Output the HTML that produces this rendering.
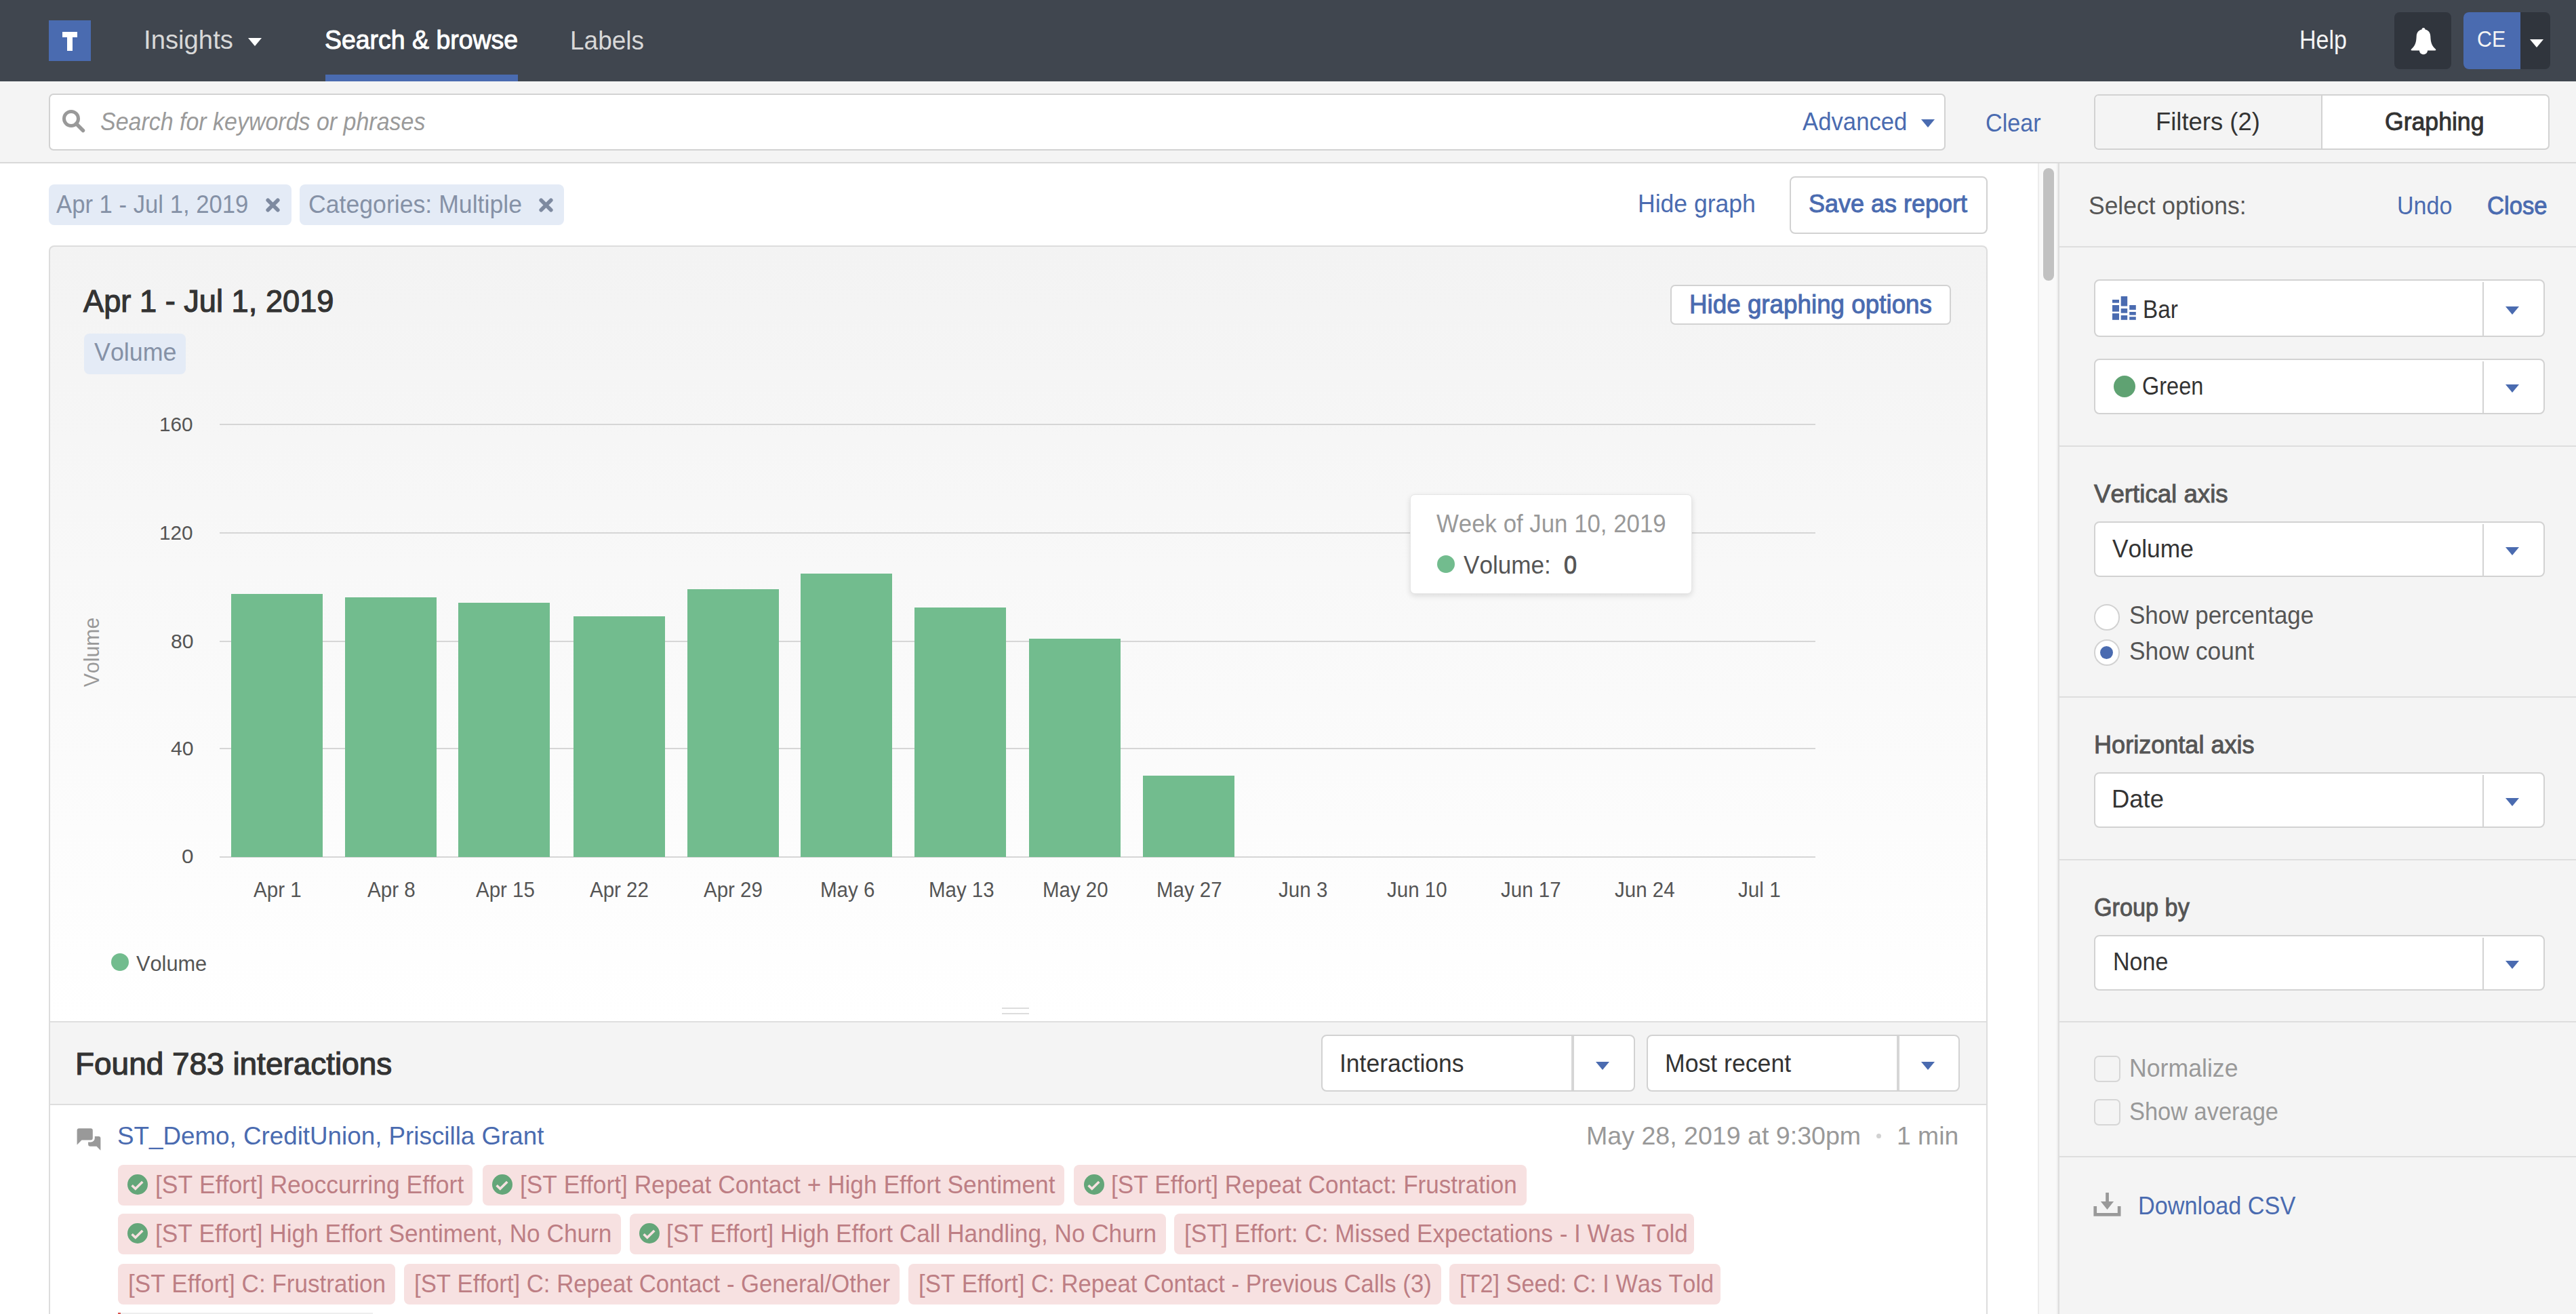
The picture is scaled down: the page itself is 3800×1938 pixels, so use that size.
<!DOCTYPE html>
<html><head><meta charset="utf-8">
<style>
*{box-sizing:border-box;margin:0;padding:0}
html,body{width:3800px;height:1938px;overflow:hidden;background:#fff;font-family:"Liberation Sans",sans-serif;color:#333}
.a{position:absolute}
.t{position:absolute;white-space:nowrap;line-height:1;font-kerning:none;transform-origin:0 0}
</style></head><body>
<div class="a" style="left:0px;top:0px;width:3800px;height:120px;background:#40464f;"></div>
<div class="a" style="left:72px;top:30px;width:62px;height:60px;background:#4a6bb0;"></div>
<div class="a" style="left:92px;top:47px;width:22px;height:8px;background:#fff;"></div>
<div class="a" style="left:99px;top:47px;width:8px;height:28px;background:#fff;"></div>
<div class="t" style="left:212.4px;top:39.2px;font-size:39px;color:#d8d8d8;transform:scaleX(0.9817);">Insights</div>
<div class="a" style="left:366.0px;top:56px;width:0;height:0;border-left:10.0px solid transparent;border-right:10.0px solid transparent;border-top:12px solid #fff"></div>
<div class="t" style="left:479.2px;top:39.7px;font-size:38.5px;color:#fff;-webkit-text-stroke:1.01px #fff;transform:scaleX(0.9724);">Search &amp; browse</div>
<div class="a" style="left:480px;top:110px;width:284px;height:10px;background:#4a6bb0;"></div>
<div class="t" style="left:841.0px;top:39.5px;font-size:39px;color:#d8d8d8;transform:scaleX(0.9490);">Labels</div>
<div class="t" style="left:3391.8px;top:39.3px;font-size:39px;color:#f4f4f4;transform:scaleX(0.8734);">Help</div>
<div class="a" style="left:3532px;top:18px;width:84px;height:84px;background:#30353d;border:0px solid transparent;border-radius:8px;"></div>
<svg class="a" style="left:3552px;top:38px" width="46" height="46" viewBox="0 0 46 46"><path fill="#fff" d="M23 3c1.5 0 2.5 1 2.5 2.4c4.8 1 7.6 4.6 7.8 9.8c.4 9.3 1.6 13.8 7.6 19.4c.9.9.5 2-.8 2H5.9c-1.3 0-1.7-1.1-.8-2c6-5.6 7.2-10.1 7.6-19.4c.2-5.2 3-8.8 7.8-9.8c0-1.4 1-2.4 2.5-2.4zM17 36.4h12c0 3.3-2.7 5.8-6 5.8s-6-2.5-6-5.8z"/></svg>
<div class="a" style="left:3634px;top:18px;width:128px;height:84px;background:#30353d;border:0px solid transparent;border-radius:8px;"></div>
<div class="a" style="left:3634px;top:18px;width:84px;height:84px;background:#4a6bb0;border-radius:8px 0 0 8px"></div>
<div class="t" style="left:3653.8px;top:41.1px;font-size:33px;color:#f4f4f4;transform:scaleX(0.9222);">CE</div>
<div class="a" style="left:3732.0px;top:58px;width:0;height:0;border-left:10.0px solid transparent;border-right:10.0px solid transparent;border-top:12px solid #fff"></div>
<div class="a" style="left:0px;top:120px;width:3800px;height:119px;background:#f4f4f4;"></div>
<div class="a" style="left:0px;top:239px;width:3800px;height:2px;background:#d9d9d9;"></div>
<div class="a" style="left:72px;top:138px;width:2798px;height:84px;background:#fff;border:2px solid #d2d2d2;border-radius:7px;"></div>
<svg class="a" style="left:90px;top:160px" width="38" height="38" viewBox="0 0 38 38"><circle cx="15" cy="15" r="10.5" fill="none" stroke="#999" stroke-width="5"/><path d="M22.5 22.5l10 10" stroke="#999" stroke-width="5.5" stroke-linecap="round"/></svg>
<div class="t" style="left:148.0px;top:161.6px;font-size:36px;color:#9a9a9a;font-style:italic;transform:scaleX(0.9433);">Search for keywords or phrases</div>
<div class="t" style="left:2659.0px;top:161.2px;font-size:37px;color:#4a6bb0;transform:scaleX(0.9384);">Advanced</div>
<div class="a" style="left:2834.0px;top:176px;width:0;height:0;border-left:10.0px solid transparent;border-right:10.0px solid transparent;border-top:12px solid #4a6bb0"></div>
<div class="t" style="left:2929.0px;top:162.7px;font-size:37px;color:#4a6bb0;transform:scaleX(0.9216);">Clear</div>
<div class="a" style="left:3089px;top:138.5px;width:672px;height:82.5px;background:#fff;border:2px solid #d2d2d2;border-radius:7px;"></div>
<div class="a" style="left:3091px;top:140.5px;width:334px;height:78.5px;background:#f4f4f4;border-radius:5px 0 0 5px"></div>
<div class="a" style="left:3424px;top:140px;width:2px;height:80px;background:#d2d2d2;"></div>
<div class="t" style="left:3179.5px;top:161.2px;font-size:37px;color:#333;transform:scaleX(0.9844);">Filters (2)</div>
<div class="t" style="left:3518.0px;top:161.2px;font-size:37px;color:#333;-webkit-text-stroke:0.97px #333;transform:scaleX(0.9622);">Graphing</div>
<div class="a" style="left:0px;top:241px;width:3037px;height:1697px;background:#fff;"></div>
<div class="a" style="left:72px;top:272px;width:358px;height:60px;background:#e4ebf6;border:0px solid transparent;border-radius:8px;"></div>
<div class="t" style="left:83.2px;top:283.5px;font-size:36px;color:#8591a6;transform:scaleX(0.9632);">Apr 1 - Jul 1, 2019</div>
<svg class="a" style="left:392px;top:291.5px" width="21" height="21" viewBox="0 0 21 21"><path d="M3.2 3.2l14.6 14.6M17.8 3.2l-14.6 14.6" stroke="#7e8aa0" stroke-width="5.6" stroke-linecap="round"/></svg>
<div class="a" style="left:442px;top:272px;width:390px;height:60px;background:#e4ebf6;border:0px solid transparent;border-radius:8px;"></div>
<div class="t" style="left:455.0px;top:283.5px;font-size:36px;color:#8591a6;transform:scaleX(0.9901);">Categories: Multiple</div>
<svg class="a" style="left:794.5px;top:291.5px" width="21" height="21" viewBox="0 0 21 21"><path d="M3.2 3.2l14.6 14.6M17.8 3.2l-14.6 14.6" stroke="#7e8aa0" stroke-width="5.6" stroke-linecap="round"/></svg>
<div class="t" style="left:2415.7px;top:283.1px;font-size:36px;color:#4a6bb0;transform:scaleX(0.9873);">Hide graph</div>
<div class="a" style="left:2640px;top:260px;width:292px;height:85px;background:#fff;border:2px solid #d2d2d2;border-radius:8px;"></div>
<div class="t" style="left:2668.4px;top:282.3px;font-size:37px;color:#4a6bb0;-webkit-text-stroke:0.97px #4a6bb0;transform:scaleX(0.9726);">Save as report</div>
<div class="a" style="left:72px;top:362px;width:2860px;height:1576px;border:2px solid #dddddd;border-bottom:none;border-radius:8px 8px 0 0;background:linear-gradient(to bottom,#f3f3f3 0px,#ffffff 1144px)"></div>
<div class="t" style="left:123.0px;top:420.4px;font-size:47px;color:#333;-webkit-text-stroke:1.24px #333;transform:scaleX(0.9620);">Apr 1 - Jul 1, 2019</div>
<div class="a" style="left:124px;top:492px;width:150px;height:60px;background:#e4ebf6;border:0px solid transparent;border-radius:8px;"></div>
<div class="t" style="left:138.6px;top:501.5px;font-size:36px;color:#8591a6;transform:scaleX(0.9953);">Volume</div>
<div class="a" style="left:2464px;top:420px;width:414px;height:59px;background:#fff;border:2px solid #d2d2d2;border-radius:7px;"></div>
<div class="t" style="left:2491.5px;top:430.4px;font-size:38px;color:#4a6bb0;-webkit-text-stroke:1.00px #4a6bb0;transform:scaleX(0.9682);">Hide graphing options</div>
<div class="a" style="left:324px;top:625px;width:2354px;height:2px;background:#d6d6d6;"></div>
<div class="a" style="left:324px;top:785px;width:2354px;height:2px;background:#d6d6d6;"></div>
<div class="a" style="left:324px;top:945px;width:2354px;height:2px;background:#d6d6d6;"></div>
<div class="a" style="left:324px;top:1103px;width:2354px;height:2px;background:#d6d6d6;"></div>
<div class="a" style="left:324px;top:1263px;width:2354px;height:2px;background:#d6d6d6;"></div>
<div class="t" style="left:235.4px;top:610.6px;font-size:30px;color:#555;transform:scaleX(0.9899);">160</div>
<div class="t" style="left:235.4px;top:770.9px;font-size:30px;color:#555;transform:scaleX(0.9899);">120</div>
<div class="t" style="left:251.5px;top:930.6px;font-size:30px;color:#555;transform:scaleX(1.0050);">80</div>
<div class="t" style="left:251.5px;top:1089.1px;font-size:30px;color:#555;transform:scaleX(1.0050);">40</div>
<div class="t" style="left:267.5px;top:1248.3px;font-size:30px;color:#555;transform:scaleX(1.0501);">0</div>
<div class="t" style="left:85px;top:950px;width:100px;text-align:center;font-size:32px;color:#999;transform-origin:50% 50%;transform:rotate(-90deg) scaleX(0.9464)">Volume</div>
<div class="a" style="left:341.4px;top:876.4px;width:135px;height:387.6px;background:#72bc8e"></div>
<div class="a" style="left:508.9px;top:881.2px;width:135px;height:382.8px;background:#72bc8e"></div>
<div class="a" style="left:676.3px;top:888.9px;width:135px;height:375.1px;background:#72bc8e"></div>
<div class="a" style="left:846.1px;top:909px;width:135px;height:355.0px;background:#72bc8e"></div>
<div class="a" style="left:1013.6px;top:868.7px;width:135px;height:395.3px;background:#72bc8e"></div>
<div class="a" style="left:1181.0px;top:846.1px;width:135px;height:417.9px;background:#72bc8e"></div>
<div class="a" style="left:1348.5px;top:896px;width:135px;height:368.0px;background:#72bc8e"></div>
<div class="a" style="left:1518.4px;top:941.7px;width:135px;height:322.3px;background:#72bc8e"></div>
<div class="a" style="left:1686.0px;top:1143.8px;width:135px;height:120.2px;background:#72bc8e"></div>
<div class="t" style="left:373.6px;top:1296.8px;font-size:31px;color:#555;transform:scaleX(0.9552);">Apr 1</div>
<div class="t" style="left:541.8px;top:1296.8px;font-size:31px;color:#555;transform:scaleX(0.9552);">Apr 8</div>
<div class="t" style="left:701.8px;top:1296.8px;font-size:31px;color:#555;transform:scaleX(0.9514);">Apr 15</div>
<div class="t" style="left:870.0px;top:1296.8px;font-size:31px;color:#555;transform:scaleX(0.9514);">Apr 22</div>
<div class="t" style="left:1038.1px;top:1296.8px;font-size:31px;color:#555;transform:scaleX(0.9514);">Apr 29</div>
<div class="t" style="left:1209.5px;top:1296.8px;font-size:31px;color:#555;transform:scaleX(0.9528);">May 6</div>
<div class="t" style="left:1369.6px;top:1296.8px;font-size:31px;color:#555;transform:scaleX(0.9498);">May 13</div>
<div class="t" style="left:1537.7px;top:1296.8px;font-size:31px;color:#555;transform:scaleX(0.9498);">May 20</div>
<div class="t" style="left:1705.8px;top:1296.8px;font-size:31px;color:#555;transform:scaleX(0.9498);">May 27</div>
<div class="t" style="left:1886.1px;top:1296.8px;font-size:31px;color:#555;transform:scaleX(0.9548);">Jun 3</div>
<div class="t" style="left:2046.1px;top:1296.8px;font-size:31px;color:#555;transform:scaleX(0.9511);">Jun 10</div>
<div class="t" style="left:2214.2px;top:1296.8px;font-size:31px;color:#555;transform:scaleX(0.9511);">Jun 17</div>
<div class="t" style="left:2382.4px;top:1296.8px;font-size:31px;color:#555;transform:scaleX(0.9511);">Jun 24</div>
<div class="t" style="left:2563.5px;top:1296.8px;font-size:31px;color:#555;transform:scaleX(0.9579);">Jul 1</div>
<div class="a" style="left:164px;top:1406px;width:26px;height:26px;border-radius:50%;background:#72bc8e"></div>
<div class="t" style="left:201.0px;top:1405.8px;font-size:31px;color:#555;transform:scaleX(0.9914);">Volume</div>
<div class="a" style="left:2080px;top:729px;width:416px;height:147px;background:#fff;border:1px solid #e6e6e6;border-radius:7px;box-shadow:0 3px 8px rgba(0,0,0,0.12)"></div>
<div class="t" style="left:2119.0px;top:753.5px;font-size:37px;color:#999;transform:scaleX(0.9408);">Week of Jun 10, 2019</div>
<div class="a" style="left:2120px;top:818.5px;width:26px;height:26px;border-radius:50%;background:#72bc8e"></div>
<div class="t" style="left:2158.7px;top:815.0px;font-size:37px;color:#555;transform:scaleX(0.9480);">Volume:</div>
<div class="t" style="left:2306.7px;top:815.0px;font-size:37px;color:#555;-webkit-text-stroke:0.97px #555;transform:scaleX(0.9252);">0</div>
<div class="a" style="left:1478px;top:1486px;width:40px;height:2px;background:#dddddd;"></div>
<div class="a" style="left:1478px;top:1494px;width:40px;height:2px;background:#dddddd;"></div>
<div class="a" style="left:74px;top:1506px;width:2856px;height:2px;background:#dedede;"></div>
<div class="a" style="left:74px;top:1508px;width:2856px;height:120px;background:#f4f4f4;"></div>
<div class="a" style="left:74px;top:1628px;width:2856px;height:2px;background:#dedede;"></div>
<div class="a" style="left:74px;top:1630px;width:2856px;height:308px;background:#ffffff;"></div>
<div class="t" style="left:111.2px;top:1544.9px;font-size:47px;color:#333;-webkit-text-stroke:1.24px #333;transform:scaleX(0.9772);">Found 783 interactions</div>
<div class="a" style="left:1949px;top:1526px;width:462.5px;height:84px;background:#fff;border:2px solid #d2d2d2;border-radius:8px;"></div>
<div class="a" style="left:2318px;top:1528px;width:4px;height:80px;background:#d6d6d6;"></div>
<div class="t" style="left:1976.3px;top:1549.5px;font-size:37px;color:#333;transform:scaleX(0.9598);">Interactions</div>
<div class="a" style="left:2354.0px;top:1566px;width:0;height:0;border-left:10.0px solid transparent;border-right:10.0px solid transparent;border-top:12px solid #4a6bb0"></div>
<div class="a" style="left:2428.5px;top:1526px;width:462.5px;height:84px;background:#fff;border:2px solid #d2d2d2;border-radius:8px;"></div>
<div class="a" style="left:2798px;top:1528px;width:4px;height:80px;background:#d6d6d6;"></div>
<div class="t" style="left:2456.0px;top:1549.5px;font-size:37px;color:#333;transform:scaleX(0.9631);">Most recent</div>
<div class="a" style="left:2834.0px;top:1566px;width:0;height:0;border-left:10.0px solid transparent;border-right:10.0px solid transparent;border-top:12px solid #4a6bb0"></div>
<svg class="a" style="left:110px;top:1660px" width="42" height="40" viewBox="0 0 42 40"><path fill="#999" d="M23.1 16.1H35.4a3 3 0 0 1 3 3V36.7L32.5 30.8H23.1a3 3 0 0 1-3-3V19.1a3 3 0 0 1 3-3z"/><rect x="0.6" y="1.3" width="29.2" height="23.3" rx="6" fill="#fff"/><path fill="#999" d="M6.6 4.3H23.8a3 3 0 0 1 3 3V18.6a3 3 0 0 1-3 3H10.5L3.6 28.5V7.3a3 3 0 0 1 3-3z"/></svg>
<div class="t" style="left:173.3px;top:1656.7px;font-size:37px;color:#4a6bb0;transform:scaleX(0.9939);">ST_Demo, CreditUnion, Priscilla Grant</div>
<div class="t" style="left:2340.0px;top:1656.7px;font-size:37px;color:#999;transform:scaleX(1.0152);">May 28, 2019 at 9:30pm</div>
<div class="a" style="left:2768px;top:1672px;width:7px;height:7px;border-radius:50%;background:#d2d2d2"></div>
<div class="t" style="left:2798.0px;top:1656.7px;font-size:37px;color:#999;transform:scaleX(1.0081);">1 min</div>
<div class="a" style="left:174px;top:1718px;width:523.4px;height:60px;background:#f7e1e1;border-radius:8px"></div>
<svg class="a" style="left:188.4px;top:1732px" width="30" height="30" viewBox="0 0 30 30"><circle cx="15" cy="15" r="15" fill="#64a679"/><path d="M6.6 16.3L11.8 21.3 22.3 11" fill="none" stroke="#f7e1e1" stroke-width="3.6"/></svg>
<div class="t" style="left:228.5px;top:1729.8px;font-size:36px;color:#bd7e84;transform:scaleX(0.9851);">[ST Effort] Reoccurring Effort</div>
<div class="a" style="left:712px;top:1718px;width:857.6px;height:60px;background:#f7e1e1;border-radius:8px"></div>
<svg class="a" style="left:726.4px;top:1732px" width="30" height="30" viewBox="0 0 30 30"><circle cx="15" cy="15" r="15" fill="#64a679"/><path d="M6.6 16.3L11.8 21.3 22.3 11" fill="none" stroke="#f7e1e1" stroke-width="3.6"/></svg>
<div class="t" style="left:766.5px;top:1729.8px;font-size:36px;color:#bd7e84;transform:scaleX(0.9802);">[ST Effort] Repeat Contact + High Effort Sentiment</div>
<div class="a" style="left:1584.4px;top:1718px;width:667.6px;height:60px;background:#f7e1e1;border-radius:8px"></div>
<svg class="a" style="left:1598.8px;top:1732px" width="30" height="30" viewBox="0 0 30 30"><circle cx="15" cy="15" r="15" fill="#64a679"/><path d="M6.6 16.3L11.8 21.3 22.3 11" fill="none" stroke="#f7e1e1" stroke-width="3.6"/></svg>
<div class="t" style="left:1638.9px;top:1729.8px;font-size:36px;color:#bd7e84;transform:scaleX(0.9750);">[ST Effort] Repeat Contact: Frustration</div>
<div class="a" style="left:174px;top:1790.3px;width:741.5px;height:60px;background:#f7e1e1;border-radius:8px"></div>
<svg class="a" style="left:188.4px;top:1804.3px" width="30" height="30" viewBox="0 0 30 30"><circle cx="15" cy="15" r="15" fill="#64a679"/><path d="M6.6 16.3L11.8 21.3 22.3 11" fill="none" stroke="#f7e1e1" stroke-width="3.6"/></svg>
<div class="t" style="left:228.5px;top:1801.9px;font-size:36px;color:#bd7e84;transform:scaleX(0.9784);">[ST Effort] High Effort Sentiment, No Churn</div>
<div class="a" style="left:928.5px;top:1790.3px;width:791.1px;height:60px;background:#f7e1e1;border-radius:8px"></div>
<svg class="a" style="left:942.9px;top:1804.3px" width="30" height="30" viewBox="0 0 30 30"><circle cx="15" cy="15" r="15" fill="#64a679"/><path d="M6.6 16.3L11.8 21.3 22.3 11" fill="none" stroke="#f7e1e1" stroke-width="3.6"/></svg>
<div class="t" style="left:983.0px;top:1801.9px;font-size:36px;color:#bd7e84;transform:scaleX(0.9766);">[ST Effort] High Effort Call Handling, No Churn</div>
<div class="a" style="left:1732.4px;top:1790.3px;width:766.8px;height:60px;background:#f7e1e1;border-radius:8px"></div>
<div class="t" style="left:1747.4px;top:1801.9px;font-size:36px;color:#bd7e84;transform:scaleX(0.9744);">[ST] Effort: C: Missed Expectations - I Was Told</div>
<div class="a" style="left:174px;top:1864px;width:409.2px;height:60px;background:#f7e1e1;border-radius:8px"></div>
<div class="t" style="left:189.0px;top:1875.7px;font-size:36px;color:#bd7e84;transform:scaleX(0.9740);">[ST Effort] C: Frustration</div>
<div class="a" style="left:596.3px;top:1864px;width:731.2px;height:60px;background:#f7e1e1;border-radius:8px"></div>
<div class="t" style="left:611.3px;top:1875.7px;font-size:36px;color:#bd7e84;transform:scaleX(0.9638);">[ST Effort] C: Repeat Contact - General/Other</div>
<div class="a" style="left:1339.7px;top:1864px;width:786.1px;height:60px;background:#f7e1e1;border-radius:8px"></div>
<div class="t" style="left:1354.7px;top:1875.7px;font-size:36px;color:#bd7e84;transform:scaleX(0.9650);">[ST Effort] C: Repeat Contact - Previous Calls (3)</div>
<div class="a" style="left:2137.9px;top:1864px;width:399.8px;height:60px;background:#f7e1e1;border-radius:8px"></div>
<div class="t" style="left:2152.9px;top:1875.7px;font-size:36px;color:#bd7e84;transform:scaleX(0.9516);">[T2] Seed: C: I Was Told</div>
<div class="a" style="left:177px;top:1936px;width:373px;height:2px;background:#eeeeee;"></div>
<div class="a" style="left:174px;top:1936px;width:4px;height:2px;background:#d9534f;"></div>
<div class="a" style="left:3006px;top:241px;width:31px;height:1697px;background:#f9f9f9;"></div>
<div class="a" style="left:3006px;top:241px;width:2px;height:1697px;background:#ececec;"></div>
<div class="a" style="left:3034px;top:241px;width:2px;height:1697px;background:#eeeeee;"></div>
<div class="a" style="left:3014px;top:248px;width:16px;height:166px;border-radius:8px;background:#c1c1c1"></div>
<div class="a" style="left:3036px;top:241px;width:764px;height:1697px;background:#f4f4f4;"></div>
<div class="a" style="left:3036px;top:241px;width:2px;height:1697px;background:#dddddd;"></div>
<div class="t" style="left:3080.9px;top:285.9px;font-size:36px;color:#555;transform:scaleX(0.9845);">Select options:</div>
<div class="t" style="left:3536.0px;top:285.9px;font-size:36px;color:#4a6bb0;transform:scaleX(0.9449);">Undo</div>
<div class="t" style="left:3668.9px;top:285.9px;font-size:36px;color:#4a6bb0;-webkit-text-stroke:0.95px #4a6bb0;transform:scaleX(0.9622);">Close</div>
<div class="a" style="left:3038px;top:363px;width:762px;height:2px;background:#dedede;"></div>
<div class="a" style="left:3038px;top:657px;width:762px;height:2px;background:#dedede;"></div>
<div class="a" style="left:3038px;top:1027px;width:762px;height:2px;background:#dedede;"></div>
<div class="a" style="left:3038px;top:1267px;width:762px;height:2px;background:#dedede;"></div>
<div class="a" style="left:3038px;top:1506px;width:762px;height:2px;background:#dedede;"></div>
<div class="a" style="left:3038px;top:1705px;width:762px;height:2px;background:#dedede;"></div>
<div class="a" style="left:3089px;top:412px;width:665px;height:85px;background:#fff;border:2px solid #d2d2d2;border-radius:8px;"></div>
<div class="a" style="left:3662px;top:416px;width:2px;height:80px;background:#d2d2d2;"></div>
<div class="a" style="left:3695.5px;top:451.5px;width:0;height:0;border-left:10.0px solid transparent;border-right:10.0px solid transparent;border-top:12px solid #4a6bb0"></div>
<svg class="a" style="left:3116px;top:437px" width="35" height="35" viewBox="0 0 35 35"><g fill="#4a6bb0"><rect x="0" y="5" width="10" height="4.7"/><rect x="0" y="13" width="10" height="9.6"/><rect x="0" y="25.2" width="10" height="9.6"/><rect x="12.7" y="0" width="9.5" height="14.5"/><rect x="12.7" y="18" width="9.5" height="6.7"/><rect x="12.7" y="28.1" width="9.5" height="6.7"/><rect x="25.2" y="13" width="9.6" height="6.9"/><rect x="25.2" y="23" width="9.6" height="4.7"/><rect x="25.2" y="30.2" width="9.6" height="4.6"/></g></svg>
<div class="t" style="left:3160.5px;top:439.3px;font-size:36px;color:#333;transform:scaleX(0.9235);">Bar</div>
<div class="a" style="left:3089px;top:529px;width:665px;height:82px;background:#fff;border:2px solid #d2d2d2;border-radius:8px;"></div>
<div class="a" style="left:3662px;top:533px;width:2px;height:77px;background:#d2d2d2;"></div>
<div class="a" style="left:3695.5px;top:567.0px;width:0;height:0;border-left:10.0px solid transparent;border-right:10.0px solid transparent;border-top:12px solid #4a6bb0"></div>
<div class="a" style="left:3118px;top:554px;width:32px;height:32px;border-radius:50%;background:#5fa272"></div>
<div class="t" style="left:3160.2px;top:552.1px;font-size:36px;color:#333;transform:scaleX(0.9023);">Green</div>
<div class="t" style="left:3088.5px;top:711.0px;font-size:36px;color:#555;-webkit-text-stroke:0.95px #555;transform:scaleX(1.0184);">Vertical axis</div>
<div class="a" style="left:3089px;top:769px;width:665px;height:82px;background:#fff;border:2px solid #d2d2d2;border-radius:8px;"></div>
<div class="a" style="left:3662px;top:773px;width:2px;height:77px;background:#d2d2d2;"></div>
<div class="a" style="left:3695.5px;top:807.0px;width:0;height:0;border-left:10.0px solid transparent;border-right:10.0px solid transparent;border-top:12px solid #4a6bb0"></div>
<div class="t" style="left:3115.9px;top:791.9px;font-size:36px;color:#333;transform:scaleX(0.9820);">Volume</div>
<div class="a" style="left:3088.5px;top:891px;width:38.5px;height:38.5px;border-radius:50%;background:#fff;border:2px solid #d2d2d2"></div>
<div class="t" style="left:3141.0px;top:890.0px;font-size:36px;color:#555;transform:scaleX(0.9716);">Show percentage</div>
<div class="a" style="left:3088.5px;top:943px;width:38.5px;height:38.5px;border-radius:50%;background:#fff;border:2px solid #d2d2d2"></div>
<div class="a" style="left:3098.3px;top:952.8px;width:19px;height:19px;border-radius:50%;background:#4a6bb0"></div>
<div class="t" style="left:3141.0px;top:942.5px;font-size:36px;color:#555;transform:scaleX(0.9793);">Show count</div>
<div class="t" style="left:3088.5px;top:1081.4px;font-size:36px;color:#555;-webkit-text-stroke:0.95px #555;transform:scaleX(1.0023);">Horizontal axis</div>
<div class="a" style="left:3089px;top:1139px;width:665px;height:82px;background:#fff;border:2px solid #d2d2d2;border-radius:8px;"></div>
<div class="a" style="left:3662px;top:1143px;width:2px;height:77px;background:#d2d2d2;"></div>
<div class="a" style="left:3695.5px;top:1177.0px;width:0;height:0;border-left:10.0px solid transparent;border-right:10.0px solid transparent;border-top:12px solid #4a6bb0"></div>
<div class="t" style="left:3114.5px;top:1161.3px;font-size:36px;color:#333;transform:scaleX(1.0124);">Date</div>
<div class="t" style="left:3088.5px;top:1321.1px;font-size:36px;color:#555;-webkit-text-stroke:0.95px #555;transform:scaleX(0.9505);">Group by</div>
<div class="a" style="left:3089px;top:1379px;width:665px;height:82px;background:#fff;border:2px solid #d2d2d2;border-radius:8px;"></div>
<div class="a" style="left:3662px;top:1383px;width:2px;height:77px;background:#d2d2d2;"></div>
<div class="a" style="left:3695.5px;top:1417.0px;width:0;height:0;border-left:10.0px solid transparent;border-right:10.0px solid transparent;border-top:12px solid #4a6bb0"></div>
<div class="t" style="left:3116.8px;top:1401.0px;font-size:36px;color:#333;transform:scaleX(0.9461);">None</div>
<div class="a" style="left:3088.5px;top:1556.5px;width:39.0px;height:39.0px;background:#f4f4f4;border:2px solid #d6d6d6;border-radius:7px;"></div>
<div class="t" style="left:3141.0px;top:1557.9px;font-size:36px;color:#999;transform:scaleX(0.9907);">Normalize</div>
<div class="a" style="left:3088.5px;top:1621px;width:39.0px;height:39px;background:#f4f4f4;border:2px solid #d6d6d6;border-radius:7px;"></div>
<div class="t" style="left:3141.0px;top:1621.5px;font-size:36px;color:#999;transform:scaleX(0.9556);">Show average</div>
<svg class="a" style="left:3088px;top:1759px" width="41" height="35" viewBox="0 0 41 35"><path fill="#999" d="M18.2 0h4.7v13h7.2L20.5 25 10.9 13h7.3z"/><path fill="#999" d="M0.4 20h4.7v9.9h30.7V20h4.7v14.8H0.4z"/></svg>
<div class="t" style="left:3154.0px;top:1761.3px;font-size:36px;color:#4a6bb0;transform:scaleX(0.9513);">Download CSV</div>
</body></html>
